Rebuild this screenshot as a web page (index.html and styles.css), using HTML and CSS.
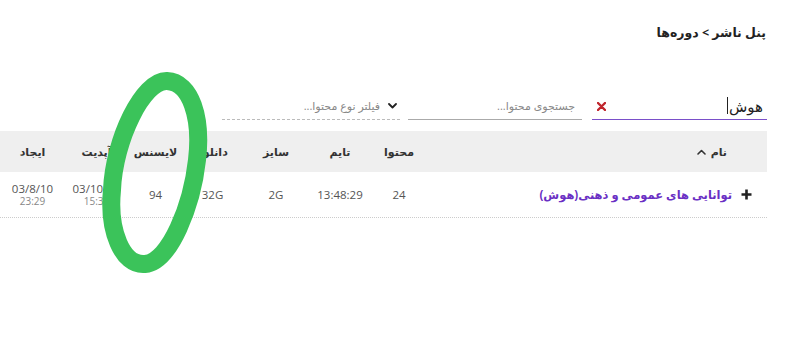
FILE: index.html
```html
<!DOCTYPE html>
<html lang="fa" dir="rtl">
<head>
<meta charset="utf-8">
<title>پنل ناشر</title>
<link rel="stylesheet" href="styles.css">
</head>
<body>
<div class="page">
  <h1 class="title">پنل ناشر &gt; دوره‌ها</h1>

  <div class="filters">
    <div class="field field-active">
      <span class="value">هوش</span><span class="caret"></span>
      <span class="spacer"></span>
      <svg class="clear" width="9" height="9" viewBox="0 0 9 9"><path d="M1 1L8 8M8 1L1 8" stroke="#c0262d" stroke-width="2.4" stroke-linecap="round"/></svg>
    </div>
    <div class="field field-search">
      <span class="ph">جستجوی محتوا...</span>
    </div>
    <div class="field field-select">
      <svg class="chev" width="9" height="6" viewBox="0 0 9 6"><path d="M1 1L4.5 4.5L8 1" fill="none" stroke="#222" stroke-width="1.8" stroke-linecap="round" stroke-linejoin="round"/></svg>
      <span class="ph">فیلتر نوع محتوا...</span>
    </div>
  </div>

  <div class="table">
    <div class="row head">
      <div class="cell name-h">نام
        <svg class="sort" width="9" height="6" viewBox="0 0 9 6"><path d="M1 5L4.5 1.5L8 5" fill="none" stroke="#333" stroke-width="1.6" stroke-linecap="round" stroke-linejoin="round"/></svg>
      </div>
      <div class="cell">محتوا</div>
      <div class="cell">تایم</div>
      <div class="cell">سایز</div>
      <div class="cell">دانلود</div>
      <div class="cell">لایسنس</div>
      <div class="cell">آپدیت</div>
      <div class="cell">ایجاد</div>
    </div>
    <div class="row body">
      <div class="cell name-d">
        <svg class="plus" width="11" height="11" viewBox="0 0 11 11"><path d="M5.5 0.5V10.5M0.5 5.5H10.5" stroke="#222" stroke-width="2.6"/></svg>
        <a class="course">توانایی های عمومی و ذهنی(هوش)</a>
      </div>
      <div class="cell num">24</div>
      <div class="cell num">13:48:29</div>
      <div class="cell num">2G</div>
      <div class="cell num">32G</div>
      <div class="cell num lic">94</div>
      <div class="cell num date"><span class="d">03/10/10</span><span class="t">15:30</span></div>
      <div class="cell num date"><span class="d">03/8/10</span><span class="t">23:29</span></div>
    </div>
  </div>

  <svg class="annot" width="800" height="337" viewBox="0 0 800 337">
    <path d="M167 81 C191 82 202 118 197 160 C192 205 170 262 145 264 C122 266 108 230 112 190 C114 140 143 80 167 81 Z" fill="none" stroke="#3bc35a" stroke-width="18" stroke-linejoin="round"/>
  </svg>
</div>
</body>
</html>
```

FILE: styles.css
```css
* { box-sizing: border-box; }
html, body { margin: 0; padding: 0; background: #fff; }
body {
  direction: rtl;
  font-family: "Open Sans", "DejaVu Sans", sans-serif;
  color: #333;
  width: 800px;
  height: 337px;
  overflow: hidden;
}
.page {
  position: relative;
  padding: 23px 33px 0 0;
  height: 337px;
}
.title {
  margin: 0 1px 0 0;
  height: 20px;
  line-height: 20px;
  font-size: 12.5px;
  font-weight: bold;
  color: #222;
}
.filters {
  margin-top: 49px;
  display: flex;
}
.field {
  height: 28px;
  display: flex;
  align-items: center;
  border-bottom: 1px solid #999;
}
.field-active {
  width: 175px;
  padding: 0 4px 0 5px;
  border-bottom-color: #7a4fc9;
}
.field-active .value {
  font-size: 15px;
  color: #222;
}
.caret {
  width: 1px;
  height: 17px;
  background: #222;
  margin-right: 1px;
}
.spacer { flex: 1; }
.clear { display: block; margin-top: 2px; }
.field-search {
  width: 174px;
  margin-right: 10px;
  padding-right: 7px;
  border-bottom-color: #aaa;
}
.ph {
  font-size: 11px;
  color: #888;
}
.field-select {
  width: 178px;
  margin-right: 8px;
  padding-right: 3px;
  gap: 8px;
  border-bottom: 1px dashed #bbb;
}
.chev { display: block; }

.table {
  margin-top: 11px;
}
.row {
  display: grid;
  grid-template-columns: 339px 58px 60px 68px 59px 55px 63px 65px;
  align-items: center;
}
.head {
  height: 41px;
  background: #efefef;
}
.head .cell {
  text-align: center;
  font-size: 11px;
  font-weight: bold;
  color: #333;
}
.head .name-h {
  text-align: right;
  padding-right: 40px;
  display: flex;
  align-items: center;
  gap: 5px;
}
.sort { display: block; margin-top: 1px; }
.body {
  height: 46px;
  border-bottom: 1px dotted #ccc;
}
.body .cell {
  text-align: center;
  font-size: 11.5px;
  color: #555;
}
.name-d {
  display: flex;
  align-items: center;
  gap: 9px;
  padding-right: 15px;
}
.plus { display: block; }
.course {
  color: #6a2fc4;
  font-size: 11.5px;
  font-weight: bold;
  cursor: pointer;
}
.lic { color: #6a3fb8; }
.date {
  display: flex;
  flex-direction: column;
  align-items: center;
  direction: ltr;
  gap: 1px;
}
.date .d { line-height: 13px; }
.date .t {
  font-size: 10px;
  line-height: 11px;
  color: #888;
}
.annot {
  position: absolute;
  top: 0;
  left: 0;
  pointer-events: none;
}
```
